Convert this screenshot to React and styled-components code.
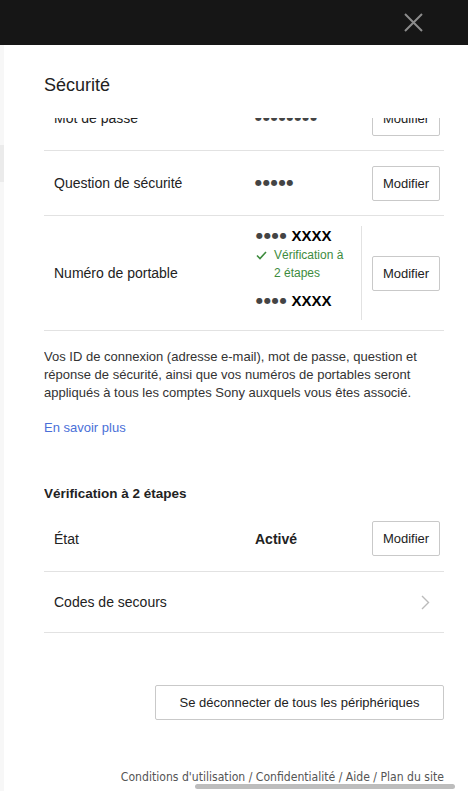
import React, { useLayoutEffect, useRef } from "react";
import styled, { createGlobalStyle } from "styled-components";

const GlobalStyle = createGlobalStyle`
   html, body {
      margin: 0;
      padding: 0;
      height: 100%;
      overflow: hidden;
      background: #fff;
   }
   body {
      font-family: "Liberation Sans", Arial, sans-serif;
      color: #222;
   }
   * {
      box-sizing: border-box;
   }
`;

const Page = styled.div`
   height: 100vh;
   display: flex;
   flex-direction: column;
   position: relative;
`;

const Header = styled.header`
   height: 45px;
   flex: none;
   background: #161616;
   display: flex;
   justify-content: flex-end;
   align-items: center;
   padding-right: 44px;
`;

const CloseBtn = styled.button`
   width: 21px;
   height: 21px;
   padding: 0;
   border: 0;
   background: none;
   display: flex;
   align-items: center;
   justify-content: center;
   cursor: pointer;
`;

const Body = styled.div`
   flex: 1;
   min-height: 0;
   display: flex;
`;

const LeftEdge = styled.div`
   width: 4px;
   flex: none;
   background: #f7f7f7;
   display: flex;
   flex-direction: column;
`;

const EdgePatch = styled.div`
   margin-top: 100px;
   height: 37px;
   background: #ebebeb;
`;

const Main = styled.main`
   flex: 1;
   min-width: 0;
   display: flex;
   flex-direction: column;
   padding: 0 24px 0 40px;
`;

const TitleBar = styled.div`
   height: 73px;
   flex: none;
   padding-top: 29px;
`;

const Title = styled.h1`
   margin: 0;
   font-size: 18px;
   line-height: 22px;
   font-weight: 400;
   color: #222;
`;

const ScrollArea = styled.div`
   flex: 1;
   min-height: 0;
   overflow: hidden;
`;

const Row = styled.div`
   display: grid;
   grid-template-columns: 201px 107px 1fr;
   align-items: center;
   min-height: ${p => p.$h || 65}px;
   padding: ${p => p.$pad || "0"} 4px ${p => p.$pad || "0"} 10px;
   border-bottom: 1px solid #e2e2e2;
   font-size: 14px;
   line-height: 18px;
`;

const Label = styled.span`
   color: #222;
`;

const Masked = styled.span`
   display: flex;
   align-items: center;
   gap: 4px;
   color: #444;
`;

const Dots = styled.span`
   font-family: "DejaVu Sans", sans-serif;
   font-size: 8px;
   letter-spacing: 0.9px;
   color: #444;
`;

const Digits = styled.b`
   font-size: 15px;
   color: #000;
   font-weight: 700;
`;

const Strong = styled.b`
   font-weight: 700;
   color: #222;
`;

const ValueCol = styled.div`
   align-self: stretch;
   border-right: 1px solid #e2e2e2;
   padding: 1px 0 10px 1px;
   display: flex;
   flex-direction: column;
`;

const Verified = styled.div`
   display: flex;
   gap: 7px;
   color: #3d8b3d;
   font-size: 12px;
   line-height: 18px;
   margin: 1px 0 10px;
`;

const CheckText = styled.span`
   width: 74px;
`;

const SmallBtn = styled.button`
   justify-self: end;
   width: 68px;
   height: 35px;
   padding: 0;
   border: 1px solid #c9c9c9;
   border-radius: 2px;
   background: #fff;
   font-family: inherit;
   font-size: 13px;
   color: #222;
   cursor: pointer;
`;

const Chevron = styled.span`
   justify-self: end;
   margin-right: 10px;
   display: flex;
`;

const Note = styled.p`
   margin: 17px 0 0;
   font-size: 13px;
   line-height: 18px;
   color: #333;
`;

const MoreLink = styled.a`
   display: block;
   margin-top: 17px;
   font-size: 13px;
   line-height: 18px;
   color: #4a6fd8;
   text-decoration: none;
`;

const SectionTitle = styled.h2`
   margin: 48px 0 3px;
   font-size: 13.5px;
   line-height: 18px;
   font-weight: 700;
   color: #222;
`;

const ButtonBar = styled.div`
   display: flex;
   justify-content: flex-end;
   margin-top: 52px;
`;

const WideBtn = styled.button`
   width: 289px;
   height: 35px;
   border: 1px solid #c9c9c9;
   border-radius: 2px;
   background: #fff;
   font-family: inherit;
   font-size: 13px;
   color: #222;
   cursor: pointer;
`;

const Footer = styled.footer`
   margin-top: 49px;
   text-align: right;
   font-family: "DejaVu Sans Condensed", "DejaVu Sans", sans-serif;
   font-size: 12.1px;
   line-height: 16px;
   color: #555;
   padding-bottom: 40px;
`;

const ScrollThumb = styled.div`
   position: absolute;
   left: 195px;
   bottom: 2px;
   width: 260px;
   height: 5px;
   border-radius: 3px;
   background: #bdbdbd;
`;

const Check = () => (
   <svg width="11" height="18" viewBox="0 0 11 18">
      <polyline points="1,9.5 4,12.5 10,6" fill="none" stroke="#3d8b3d" strokeWidth="1.6" />
   </svg>
);

const ChevronIcon = () => (
   <svg width="9" height="15" viewBox="0 0 9 15">
      <polyline points="1,1 7.5,7.5 1,14" fill="none" stroke="#bbb" strokeWidth="1.4" />
   </svg>
);

const CloseIcon = () => (
   <svg width="19" height="19" viewBox="0 0 19 19">
      <path d="M1 1 L18 18 M18 1 L1 18" stroke="#8c8c8c" strokeWidth="2" />
   </svg>
);

export default function App() {
   const scrollRef = useRef(null);

   useLayoutEffect(() => {
      if (scrollRef.current) scrollRef.current.scrollTop = 32;
   }, []);

   return (
      <Page>
         <GlobalStyle />
         <Header>
            <CloseBtn title="Fermer"><CloseIcon /></CloseBtn>
         </Header>
         <Body>
            <LeftEdge><EdgePatch /></LeftEdge>
            <Main>
               <TitleBar>
                  <Title>Sécurité</Title>
               </TitleBar>
               <ScrollArea ref={scrollRef}>
                  <Row>
                     <Label>Mot de passe</Label>
                     <Masked><Dots>●●●●●●●●</Dots></Masked>
                     <SmallBtn>Modifier</SmallBtn>
                  </Row>
                  <Row>
                     <Label>Question de sécurité</Label>
                     <Masked><Dots>●●●●●</Dots></Masked>
                     <SmallBtn>Modifier</SmallBtn>
                  </Row>
                  <Row $pad="10px">
                     <Label>Numéro de portable</Label>
                     <ValueCol>
                        <Masked><Dots>●●●●</Dots><Digits>XXXX</Digits></Masked>
                        <Verified>
                           <Check />
                           <CheckText>Vérification à 2 étapes</CheckText>
                        </Verified>
                        <Masked><Dots>●●●●</Dots><Digits>XXXX</Digits></Masked>
                     </ValueCol>
                     <SmallBtn>Modifier</SmallBtn>
                  </Row>
                  <Note>
                     Vos ID de connexion (adresse e-mail), mot de passe, question et
                     réponse de sécurité, ainsi que vos numéros de portables seront
                     appliqués à tous les comptes Sony auxquels vous êtes associé.
                  </Note>
                  <MoreLink href="#">En savoir plus</MoreLink>
                  <SectionTitle>Vérification à 2 étapes</SectionTitle>
                  <Row $h={66}>
                     <Label>État</Label>
                     <Strong>Activé</Strong>
                     <SmallBtn>Modifier</SmallBtn>
                  </Row>
                  <Row $h={61}>
                     <Label>Codes de secours</Label>
                     <span />
                     <Chevron><ChevronIcon /></Chevron>
                  </Row>
                  <ButtonBar>
                     <WideBtn>Se déconnecter de tous les périphériques</WideBtn>
                  </ButtonBar>
                  <Footer>Conditions d'utilisation / Confidentialité / Aide / Plan du site</Footer>
               </ScrollArea>
            </Main>
         </Body>
         <ScrollThumb />
      </Page>
   );
}
